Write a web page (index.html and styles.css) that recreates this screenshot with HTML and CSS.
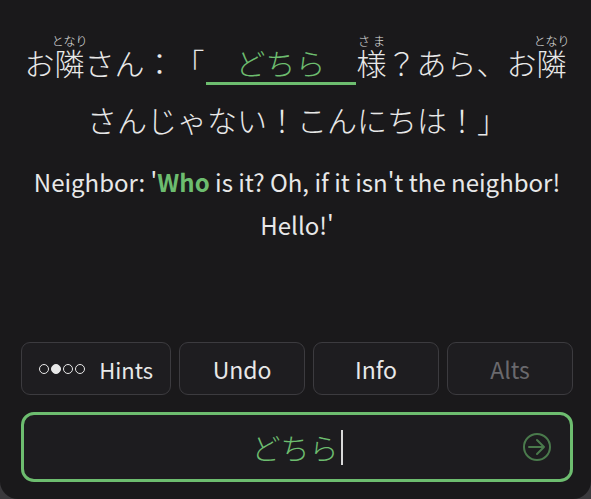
FILE: index.html
```html
<!DOCTYPE html>
<html lang="ja">
<head>
  <meta charset="UTF-8">
  <meta name="viewport" content="width=device-width, initial-scale=1.0">
  <title>どちら</title>
  <link rel="stylesheet" href="styles.css">
</head>
<body>
  <div id="paneel">
    <!--zin met het gat-->
    <div class="zin">
      <p class="japans">お<ruby>隣<rt>となり</rt></ruby>さん：「<span class="gat">どちら</span><ruby>様<rt>さま</rt></ruby>？あら、お<ruby>隣<rt>となり</rt></ruby><br>さんじゃない！こんにちは！」</p>
      <p class="vertaling">Neighbor: '<strong>Who</strong> is it? Oh, if it isn't the neighbor! Hello!'</p>
    </div>

    <div class="knoppen">
      <button class="knop breed">
        <span class="stippen"><i></i><i class="vol"></i><i></i><i></i></span>
        Hints
      </button>
      <button class="knop">Undo</button>
      <button class="knop">Info</button>
      <button class="knop uit">Alts</button>
    </div>

    <div class="invoer">
      <span class="antwoord">どちら</span><span class="cursor"></span>
      <svg class="pijl" width="30" height="30" viewBox="0 0 30 30">
        <circle cx="15" cy="15" r="13" fill="none" stroke="#4a7a4c" stroke-width="2"/>
        <path d="M7 15 H22 M15 8 L22 15 L15 22" fill="none" stroke="#4a7a4c" stroke-width="2" stroke-linecap="round" stroke-linejoin="round"/>
      </svg>
    </div>
  </div>
</body>
</html>
```
FILE: styles.css
```css
    body {
      margin: 0;
      background: #3a393c;
      font-family: "Noto Sans CJK JP", "Noto Sans", sans-serif;
      color: #e8e8e8;
    }

    #paneel {
      height: 499px;
      box-sizing: border-box;
      background: #1a191b;
      border-radius: 0 0 18px 18px;
      padding: 34px 18px 17px 21px;
      display: flex;
      flex-direction: column;
    }

    .zin {
      text-align: center;
    }

    .japans {
      margin: 0 -10px;
      font-size: 30px;
      font-weight: 300;
      line-height: 57px;
      text-spacing-trim: space-all;
    }

    .japans rt {
      font-size: 12px;
      line-height: 1;
      color: #e0e0e0;
    }

    .gat {
      display: inline-block;
      width: 150px;
      line-height: 40px;
      color: #6dbd6f;
      border-bottom: 3px solid #6dbd6f;
      margin: 0 1px;
    }

    .vertaling {
      margin: 12px 0 0;
      font-size: 24px;
      line-height: 43px;
    }

    .vertaling strong {
      color: #6dbd6f;
    }

    .knoppen {
      margin-top: auto;
      display: flex;
      gap: 8px;
    }

    .knop {
      flex: 125 1 0;
      height: 53px;
      background: #1e1d20;
      border: 1.5px solid #3c3b3f;
      border-radius: 9px;
      color: #e8e8e8;
      font-family: inherit;
      font-size: 23px;
      display: flex;
      align-items: center;
      justify-content: center;
      gap: 14px;
    }

    .knop.breed {
      flex-grow: 152;
      font-size: 22px;
    }

    .knop.uit {
      color: #6a696d;
    }

    .stippen {
      display: flex;
      gap: 2px;
    }

    .stippen i {
      width: 8px;
      height: 8px;
      border: 1.5px solid #e8e8e8;
      border-radius: 50%;
    }

    .stippen i.vol {
      background: #e8e8e8;
    }

    .invoer {
      margin-top: 17px;
      height: 70px;
      box-sizing: border-box;
      border: 3px solid #6dbd6f;
      border-radius: 13px;
      background: #1d1c1f;
      display: flex;
      align-items: center;
      justify-content: center;
      position: relative;
    }

    .antwoord {
      color: #6dbd6f;
      font-size: 29px;
      font-weight: 300;
    }

    .cursor {
      width: 2px;
      height: 35px;
      background: #d8d8d8;
      margin-left: 2px;
    }

    .pijl {
      position: absolute;
      right: 18px;
      top: 17px;
    }
```
